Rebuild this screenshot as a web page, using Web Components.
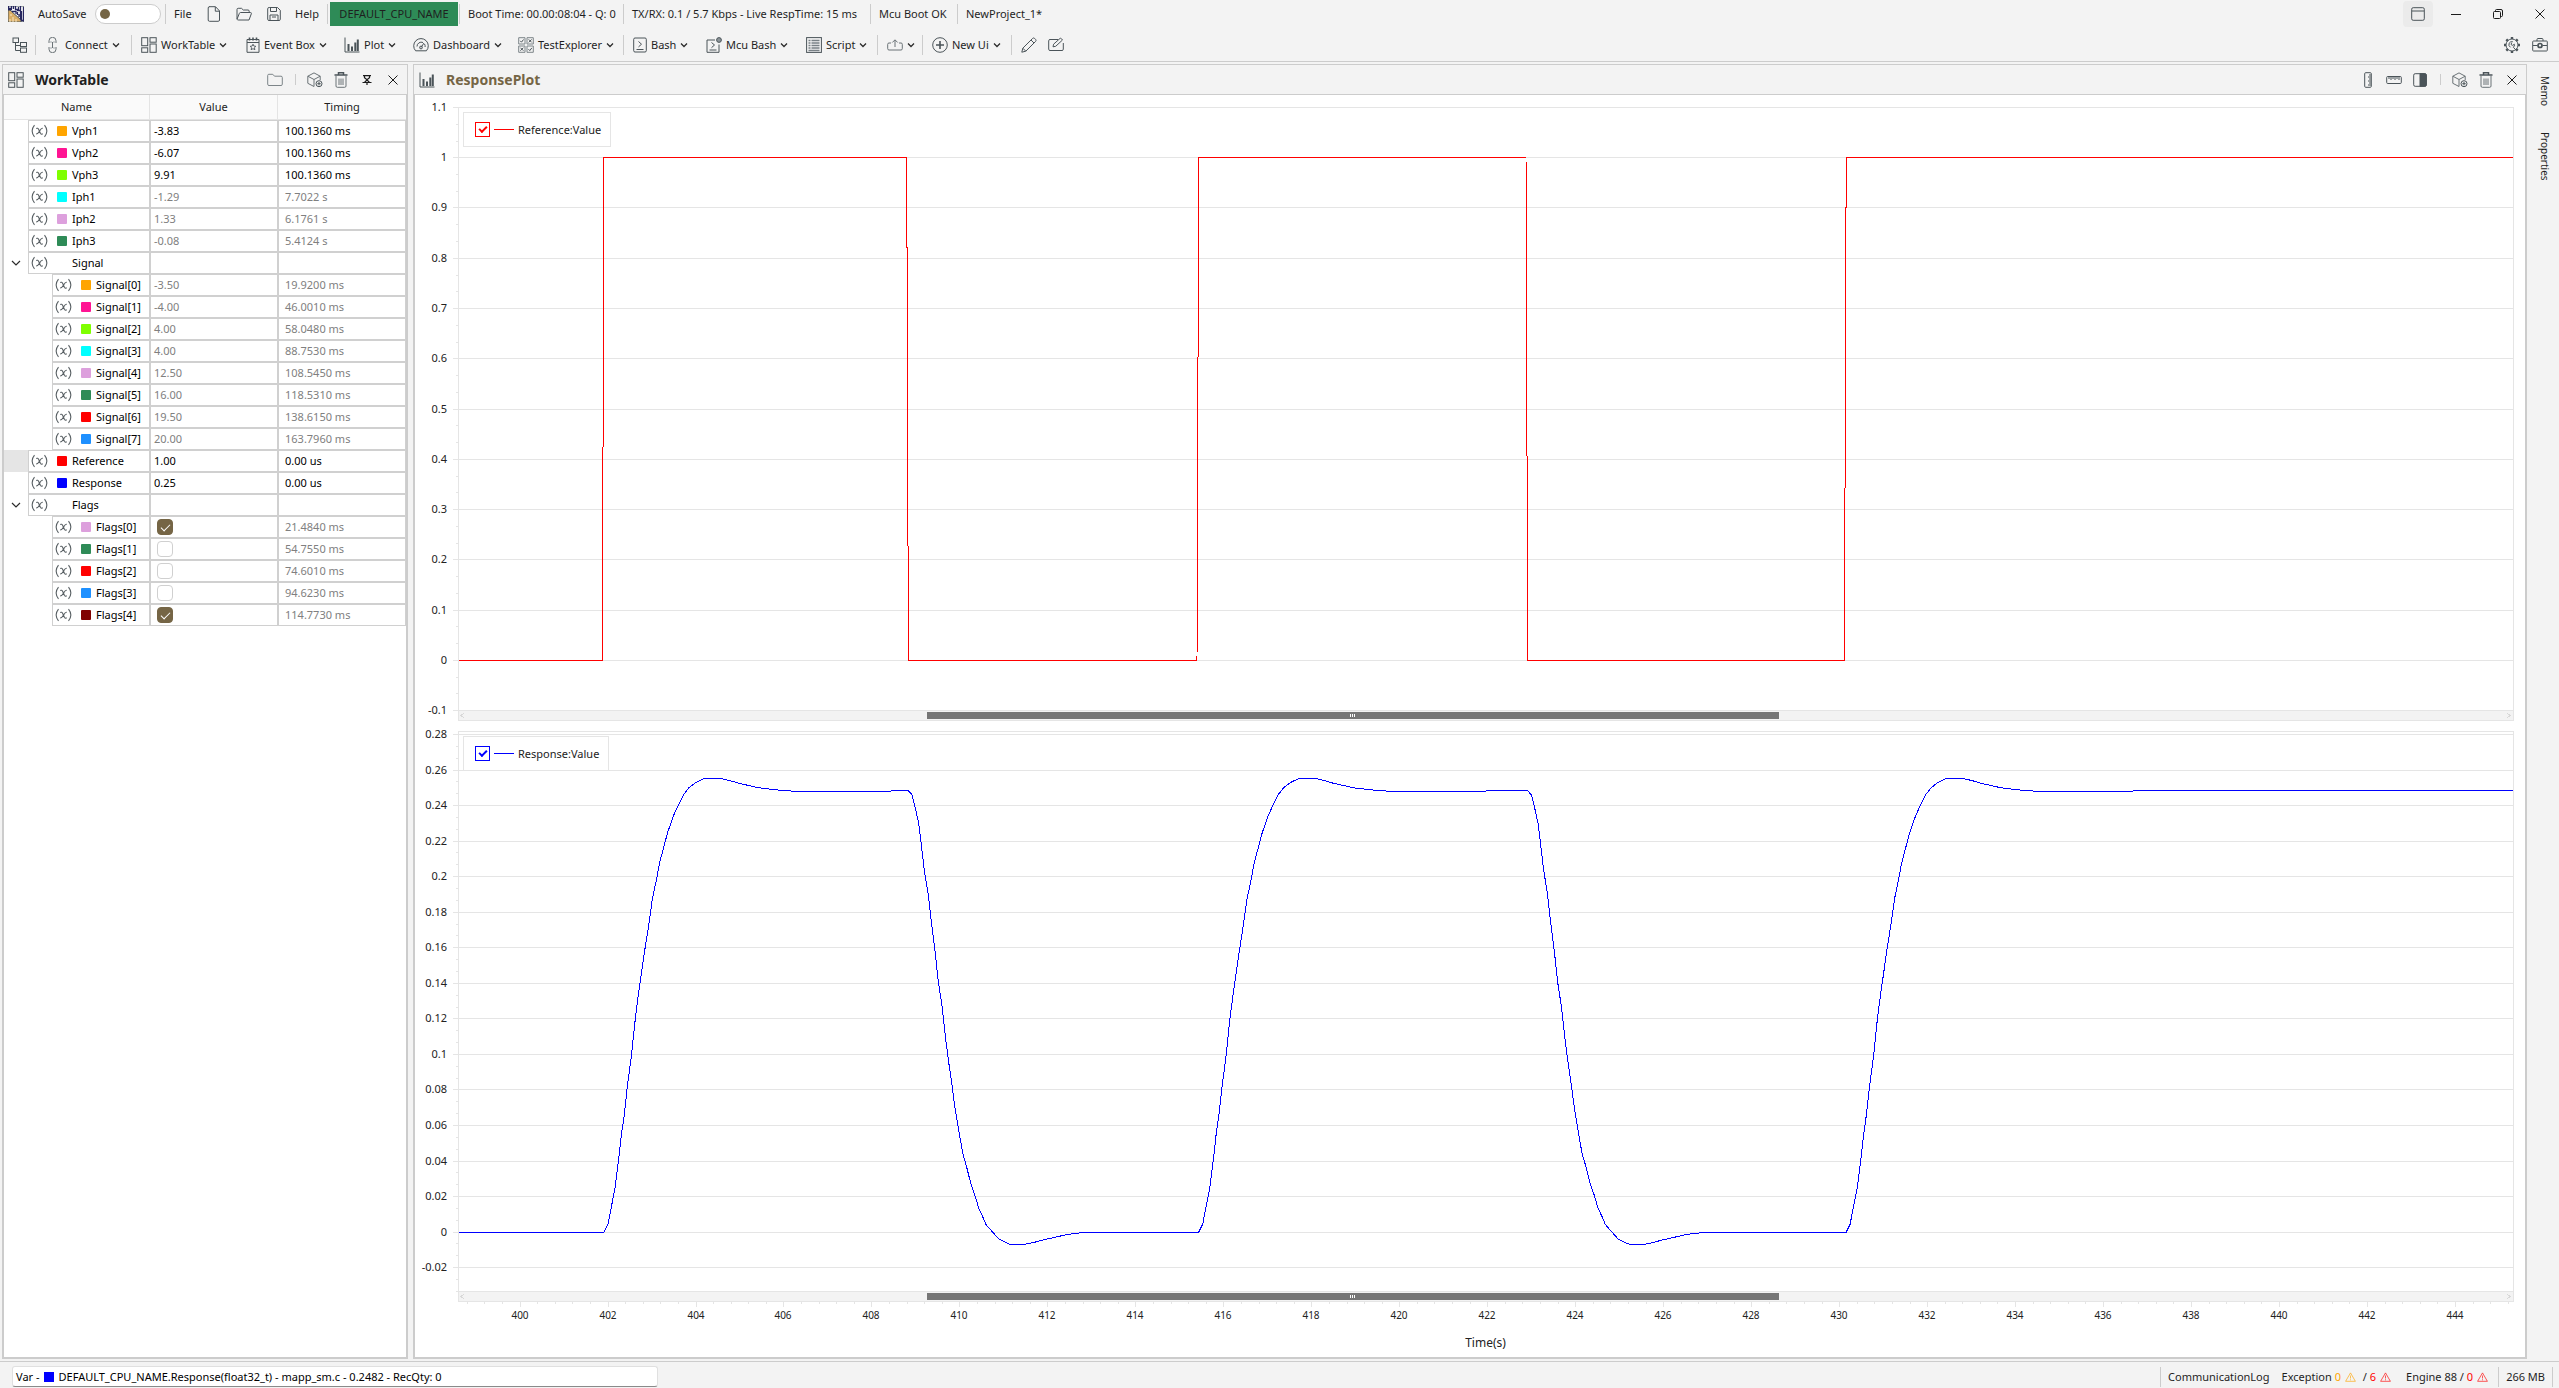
<!DOCTYPE html>
<html lang="en">
<head>
<meta charset="utf-8">
<title>NewProject_1</title>
<style>
html, body { margin: 0; height: 100%; }
body { background: #f3f3f3; color: #1f1f1f; font: 11px/16px "Noto Sans", "Open Sans", sans-serif; overflow: hidden; }
</style>
</head>
<body>
<app-shell></app-shell>
<script>
const define = (tag, html, setup) => customElements.define(tag, class extends HTMLElement {
  constructor() {
    super();
    this.attachShadow({ mode: 'open' }).innerHTML = html;
  }
  connectedCallback() {
    if (this.ready) return;
    this.ready = true;
    if (setup) setup(this, this.shadowRoot);
  }
});

/* ---------- icons: [width, height, markup] ---------- */
const ICONS = {
  logo: [16, 16, '<rect width="16" height="16" fill="#fff"/><path d="M0 4h2l11 10v2H0z" fill="#d9ad66"/><path d="M2 13v3M5 11v5M8 13v3M3 8v2" stroke="#f7e7c6"/><path d="M.5 0v2.500h3V0M5.500 0v3M7.500 0v3.500h3V1M12.500 0v4M0 3.500h4M4 5.500h4v2.500M9 4.500h3.500v9M15.500 1v14.500M13.500 5v9.500H16M9.500 6v3M11 8v3" stroke="#26265f" stroke-width="1.300" fill="none"/>'],
  file: [14, 16, '<path d="M2 .7h6.500l4 4.200V14q0 1.300-1.300 1.300H2.500Q1.200 15.300 1.200 14V2Q1.200.7 2.500.7M8.300.9v4.300h4.200"/>'],
  open: [16, 16, '<path d="M1 13V3.500Q1 2.300 2.200 2.300h3.300L7.300 4H12q1.200 0 1.200 1.200V6.500M1 13.200q.3.800 1.200.800H13L15.400 7.600q.1-1.100-1-1.100H4.500q-.8 0-1.100.8z"/>'],
  save: [14, 16, '<path d="M2.200 1.500h8.300l2.800 2.800v8.900q0 1.300-1.300 1.300H2Q.7 14.500.7 13.200V2.800Q.7 1.500 2.200 1.500M3.500 1.700v3.800h6V1.700M3 14.300V9h8v5.300M5 11h4"/>'],
  tree: [16, 16, '<rect x="1" y="1" width="5.500" height="4.500"/><path d="M3.500 5.500v8h4.500M3.500 8.500h4.500"/><rect x="8.500" y="5.500" width="6" height="4"/><rect x="8.500" y="11" width="6" height="4.300"/>'],
  link: [16, 16, '<path d="M4 6V3.800a3.500 3.500 0 0 1 7 0V6M4 10v2.200a3.500 3.500 0 0 0 7 0V10M7.500 5v6" stroke="#6b7377"/><path d="M6 6v-2M9 6v-2M6 10v2M9 10v2" stroke="#a5abae"/>'],
  work: [16, 16, '<rect x=".7" y=".7" width="6" height="8"/><rect x=".7" y="10.800" width="6" height="4.500"/><rect x="9" y=".7" width="6.200" height="4.500"/><rect x="9" y="7" width="6.200" height="8.300"/>'],
  event: [14, 16, '<path d="M1 2.500h12v12.800H1zM1 5.500h12"/><path d="M3.500.5v3M7 .5v3M10.500.5v3" stroke-width="1.600"/><path d="M7 7.200l.9 1.900 2 .2-1.500 1.400.5 2L7 11.700l-1.900 1 .5-2-1.500-1.400 2-.2z" stroke-width=".9"/>'],
  plot: [16, 16, '<path d="M1 .5v14.500h14.500"/><path d="M4.500 14V7M8 14V9.500M11.300 14V5.500M13.800 14V2.500" stroke-width="2"/>'],
  dash: [16, 16, '<path d="M2.600 13.800a7.300 7.300 0 1 1 10.800 0zM4 9.500a4.300 4.300 0 0 1 6-4M11.500 7a4.300 4.300 0 0 1 .6 3M8 10.500L11 6"/><circle cx="8" cy="10.500" r="1.400"/>'],
  test: [16, 16, '<path d="M.7.7h6.300v6.300H.7zM9 .7h6.300v6.300H9zM.7 9h6.300v6.300H.7zM9 9h6.300v6.300H9z" stroke="#7d8589"/><path d="M2.200 3.800l1.300 1.400 2-2.700M10.700 2.400l3 3M13.700 2.400l-3 3M2.400 10.700l3 3M5.400 10.700l-3 3M10.500 12.200l1.300 1.400 2-2.700"/>'],
  bash: [14, 16, '<rect x=".7" y="1" width="12.600" height="14" rx="1.300"/><path d="M5.500 4.500L8.500 7.200l-3 2.700M3.500 12.500h7"/>'],
  mcu: [16, 16, '<path d="M9 3H1v12.300h12V7.500"/><path d="M5.500 5.500L8.500 8l-3 2.700M3.500 13h7"/><circle cx="13" cy="3" r="2.400" fill="#8d9599"/>'],
  script: [16, 16, '<rect x=".6" y=".6" width="14.800" height="14.800"/><path d="M2.500 3.500h2M5.500 3.500h8M2.500 6h2M5.500 6h8M2.500 8.500h2M5.500 8.500h8M2.500 11h2M5.500 11h8M2.500 13.500h11" stroke="#798186" stroke-width="1.500"/>'],
  export: [16, 16, '<path d="M4 6H2Q.7 6 .7 7.300v4.400Q.7 13 2 13h12q1.300 0 1.300-1.300V7.300Q15.300 6 14 6h-2M8 10V3M5.300 5.500L8 2.800l2.700 2.700" stroke="#6b7377"/>'],
  plus: [16, 16, '<circle cx="8" cy="8" r="7.300"/><path d="M8 4v8M4 8h8" stroke-width="1.600"/>'],
  pencil: [16, 16, '<path d="M.8 15.200l1-4L11.600 1.400q1-.9 2 0l1 1q.9 1 0 2L4.800 14.200zM10 3l3 3M1.800 11.200l3 3"/>'],
  edit: [16, 16, '<path d="M10 2.500H2Q.7 2.500.7 3.800v8.400Q.7 13.500 2 13.500h12q1.300 0 1.300-1.300V6M5 9.800l.6-2.600L12.500 1l2 2-6.800 6.300z"/>'],
  gear: [16, 16, '<circle cx="8" cy="8" r="6" stroke-width="1"/><path d="M8 0v2M8 14v2M0 8h2M14 8h2M2.300 2.300l1.500 1.500M12.200 12.200l1.500 1.500M2.300 13.700l1.500-1.500M12.200 3.800l1.500-1.500" stroke-width="2.400"/><path d="M8.800 4.700q-2.500-.5-3.700 1.600-.9 2.700 1.400 4M7.500 5.800l-.3 1.900 1.500.7 1.600-1.200q.8 1.900-1 3l2.700 3"/>'],
  box: [16, 16, '<path d="M5 4V2.500Q5 1.500 6 1.500h4q1 0 1 1V4M1.500 4h13q.8 0 .8.800v8.400q0 .8-.8.800h-13q-.8 0-.8-.8V4.800Q.7 4 1.500 4M1 8.500h4.500M10.500 8.500H15"/><circle cx="8" cy="8.500" r="2" stroke-width="1.700"/>'],
  window: [14, 14, '<rect x=".7" y=".7" width="12.600" height="12.600" rx="1.500"/><path d="M1 4h12"/>'],
  min: [10, 10, '<path d="M0 5.500h10" stroke="#1b1b1b"/>'],
  restore: [10, 10, '<rect x=".5" y="2.500" width="7" height="7" rx="1" stroke="#1b1b1b"/><path d="M2.500 2.300V1.500q0-1 1-1H8q1.500 0 1.500 1.500v4.500q0 1-1 1H8" stroke="#1b1b1b"/>'],
  close: [10, 10, '<path d="M.5.5l9 9M9.500.5l-9 9" stroke="#1b1b1b"/>'],
  folder: [16, 16, '<path d="M1.800 2.300h4l1.700 1.900H14q1.300 0 1.300 1.300v6.700q0 1.300-1.300 1.300H2Q.7 13.500.7 12.200V3.500Q.7 2.300 1.800 2.300" stroke="#7d8589"/>'],
  cube: [16, 16, '<path d="M7 14.500L.8 11.300V4.200L7 .9l6.200 3.300V8M.8 4.200L7 7.500l6.200-3.300M7 7.500v7" stroke="#6b7377"/><circle cx="12" cy="11.700" r="3"/><path d="M12 10v3.400M10.300 11.700h3.400"/>'],
  trash: [14, 16, '<path d="M2 4v10q0 1.300 1.300 1.300h7.400Q12 15.300 12 14V4M5 6.500v6.500M7 6.500v6.500M9 6.500v6.500" stroke="#6b7377"/><path d="M.5 3h13M4.500 2.500V.8h5v1.700" stroke-width="1.500"/>'],
  pin: [10, 10, '<path d="M1 .7h8M2.500.7v2L5 4.800 7.500 2.700v-2M2.500 7.500L5 4.800l2.500 2.700zM.5 7.500h9M5 7.500v3" stroke="#1b1b1b" stroke-width="1.200"/>'],
  rulerv: [8, 16, '<rect x=".7" y=".7" width="6.600" height="14.600" rx="1"/><path d="M5 3h2M4 5h3M5 7h2M4 9h3M5 11h2M4 13h3"/>'],
  rulerh: [16, 16, '<rect x=".7" y="4.500" width="14.600" height="7" rx="1"/><path d="M3 5v2M5 5v3M7 5v2M9 5v3M11 5v2M13 5v3"/>'],
  half: [14, 14, '<rect x=".7" y=".7" width="12.600" height="12.600" rx="1.500"/><path d="M7 .7h4.800q1.500 0 1.500 1.500v9.600q0 1.500-1.500 1.500H7z" fill="#4b5459"/>'],
  down: [8, 8, '<path d="M1 2.500L4 5.500l3-3" stroke="#2b2b2b" stroke-width="1.300"/>'],
  expand: [10, 8, '<path d="M1 2l4 4 4-4" stroke="#2b2b2b" stroke-width="1.200"/>'],
  variable: [17, 14, '<path d="M3.500 1.200Q-1.200 7 3.500 12.800M13.500 1.200Q18.200 7 13.500 12.800M5.200 4.500q1.600-.9 2.400.7l1.800 4q.8 1.600 2.400.6M11.800 4.300q-1.500-.3-3.200 2.700t-3.500 3" stroke="#596064" stroke-width="1.100"/>'],
  warn: [11, 10, '<path d="M5.500 .9L10.400 9.300H.6zM5.500 3.500v3M5.500 7.300v1" stroke="currentColor" opacity=".65"/>']
};

define('ui-icon', '', (el, root) => {
  const [w, h, body] = ICONS[el.getAttribute('name')];
  root.innerHTML = `<style>:host{display:inline-flex;flex:none;align-items:center}svg{display:block}</style>
    <svg width="${w}" height="${h}" viewBox="0 0 ${w} ${h}" fill="none" stroke="#4b5459" aria-hidden="true">${body}</svg>`;
});

/* vertical hairline between groups */
define('bar-sep', '<style>:host{flex:none;display:block;width:1px;height:var(--h,20px);background:#cccccc}</style>');

define('status-text', `<style>
  :host { display: flex; flex: none; align-items: center; white-space: nowrap; width: var(--w, auto); box-sizing: border-box; }
</style><slot></slot>`);

/* toolbar button: icon, text, optional drop-down arrow */
define('tool-button', `<style>
  :host { display: flex; flex: none; width: var(--w, auto); }
  button { display: flex; align-items: center; gap: 4px; width: 100%; height: 24px; padding: 0; border: 0; background: none;
    font: inherit; color: inherit; white-space: nowrap; }
</style><button type="button"></button>`, (el, root) => {
  const b = root.querySelector('button');
  const icon = el.getAttribute('icon'), text = el.getAttribute('text') || '';
  b.innerHTML = (icon ? `<ui-icon name="${icon}"></ui-icon>` : '') + (text ? `<span>${text}</span>` : '') +
    (el.hasAttribute('menu') ? '<ui-icon name="down"></ui-icon>' : '');
  if (!text) b.setAttribute('aria-label', el.getAttribute('label') || icon);
});

define('toggle-switch', `<style>
  :host { display: flex; flex: none; width: 123px; }
  label { display: flex; flex: 1; align-items: center; justify-content: space-between; }
  input { appearance: none; margin: 0; width: 66px; height: 20px; border: 1px solid #cccccc; border-radius: 10px; background: #fff; display: flex; align-items: center; padding: 0 4px; box-sizing: border-box; }
  input::before { content: ""; width: 10px; height: 10px; border-radius: 5px; background: #756545; }
</style><label><slot></slot><input type="checkbox"></label>`);

define('title-bar', `<style>
  :host { display: flex; align-items: center; height: 28px; padding-left: 8px; box-sizing: border-box; }
  .cpu { background: #2e8b57; height: 24px; --w: 128px; justify-content: center; margin: 0 1px 0 2px; }
  .pad { padding-left: 8px; }
  .win { margin-left: auto; display: flex; align-items: center; gap: 4px; }
  .win button { display: flex; align-items: center; justify-content: center; width: 38px; height: 26px; padding: 0; border: 0; border-radius: 4px; background: none; }
  .win .on { background: #ebebeb; width: 30px; }
</style>
<status-text style="--w:30px"><ui-icon name="logo"></ui-icon></status-text>
<toggle-switch>AutoSave</toggle-switch>
<status-text style="--w:4px"></status-text><bar-sep></bar-sep>
<status-text class="pad" style="--w:41px">File</status-text>
<tool-button icon="file" label="New" style="--w:29px"></tool-button>
<tool-button icon="open" label="Open" style="--w:31px"></tool-button>
<tool-button icon="save" label="Save" style="--w:28px"></tool-button>
<status-text style="--w:32px">Help</status-text><bar-sep></bar-sep>
<status-text class="cpu">DEFAULT_CPU_NAME</status-text><bar-sep></bar-sep>
<status-text class="pad" style="--w:163px">Boot Time: 00.00:08:04 - Q: 0</status-text><bar-sep></bar-sep>
<status-text class="pad" style="--w:246px">TX/RX: 0.1 / 5.7 Kbps - Live RespTime: 15 ms</status-text><bar-sep></bar-sep>
<status-text class="pad" style="--w:86px">Mcu Boot OK</status-text><bar-sep></bar-sep>
<status-text class="pad">NewProject_1*</status-text>
<div class="win">
  <button class="on" type="button" aria-label="Layout"><ui-icon name="window"></ui-icon></button>
  <button type="button" aria-label="Minimize"><ui-icon name="min"></ui-icon></button>
  <button type="button" aria-label="Restore"><ui-icon name="restore"></ui-icon></button>
  <button type="button" aria-label="Close"><ui-icon name="close"></ui-icon></button>
</div>`);

define('tool-bar', `<style>
  :host { display: flex; align-items: center; height: 34px; padding: 0 11px 0 12px; box-sizing: border-box; border-bottom: 1px solid #cccccc; }
  .end { margin-left: auto; display: flex; gap: 12px; }
  .lead { padding-left: 9px; }
</style>
<tool-button icon="tree" label="Project tree" style="--w:23px"></tool-button><bar-sep></bar-sep>
<tool-button class="lead" icon="link" text="Connect" menu style="--w:86px"></tool-button><bar-sep></bar-sep>
<tool-button class="lead" icon="work" text="WorkTable" menu style="--w:105px"></tool-button>
<tool-button icon="event" text="Event Box" menu style="--w:98px"></tool-button>
<tool-button icon="plot" text="Plot" menu style="--w:69px"></tool-button>
<tool-button icon="dash" text="Dashboard" menu style="--w:105px"></tool-button>
<tool-button icon="test" text="TestExplorer" menu style="--w:105px"></tool-button><bar-sep></bar-sep>
<tool-button class="lead" icon="bash" text="Bash" menu style="--w:73px"></tool-button>
<tool-button icon="mcu" text="Mcu Bash" menu style="--w:100px"></tool-button>
<tool-button icon="script" text="Script" menu style="--w:71px"></tool-button><bar-sep></bar-sep>
<tool-button class="lead" icon="export" label="Export" menu style="--w:35px"></tool-button><bar-sep></bar-sep>
<tool-button class="lead" icon="plus" text="New Ui" menu style="--w:79px"></tool-button><bar-sep></bar-sep>
<tool-button class="lead" icon="pencil" label="Draw" style="--w:27px"></tool-button>
<tool-button icon="edit" label="Edit"></tool-button>
<div class="end">
  <tool-button icon="gear" label="Settings"></tool-button>
  <tool-button icon="box" label="Tools"></tool-button>
</div>`);

/* docked panel: header with title and actions, slotted body */
define('dock-panel', `<style>
  :host { display: flex; flex-direction: column; border: 1px solid #cccccc; box-sizing: border-box; min-width: 0; }
  header { display: flex; align-items: center; height: 29px; padding: 0 1px 0 5px; border-bottom: 1px solid #cccccc; flex: none; }
  h2 { margin: 0 auto 0 11px; font-size: 14px; line-height: 20px; font-weight: 700; color: var(--title, #1f1f1f); }
  ::slotted([slot=actions]) { display: flex; align-items: center; justify-content: center; width: 26px; }
  .body { flex: 1; min-height: 0; display: flex; flex-direction: column; background: #fff; border: solid #cccccc; border-width: 0 1px 1px; }
</style>
<header><slot name="icon"></slot><h2></h2><slot name="actions"></slot></header>
<div class="body"><slot></slot></div>`, (el, root) => { root.querySelector('h2').textContent = el.getAttribute('heading'); });

/* ---------- variable grid ---------- */
const ROWS = [
  [1, '#ffa500', 'Vph1', '-3.83', '100.1360 ms', 'live'],
  [1, '#ff1493', 'Vph2', '-6.07', '100.1360 ms', 'live'],
  [1, '#7fff00', 'Vph3', '9.91', '100.1360 ms', 'live'],
  [1, '#00ffff', 'Iph1', '-1.29', '7.7022 s'],
  [1, '#dda0dd', 'Iph2', '1.33', '6.1761 s'],
  [1, '#2e8b57', 'Iph3', '-0.08', '5.4124 s'],
  [1, '', 'Signal', '', '', 'group'],
  [2, '#ffa500', 'Signal[0]', '-3.50', '19.9200 ms'],
  [2, '#ff1493', 'Signal[1]', '-4.00', '46.0010 ms'],
  [2, '#7fff00', 'Signal[2]', '4.00', '58.0480 ms'],
  [2, '#00ffff', 'Signal[3]', '4.00', '88.7530 ms'],
  [2, '#dda0dd', 'Signal[4]', '12.50', '108.5450 ms'],
  [2, '#2e8b57', 'Signal[5]', '16.00', '118.5310 ms'],
  [2, '#ff0000', 'Signal[6]', '19.50', '138.6150 ms'],
  [2, '#1e90ff', 'Signal[7]', '20.00', '163.7960 ms'],
  [1, '#ff0000', 'Reference', '1.00', '0.00 us', 'live current'],
  [1, '#0000ff', 'Response', '0.25', '0.00 us', 'live'],
  [1, '', 'Flags', '', '', 'group'],
  [2, '#dda0dd', 'Flags[0]', true, '21.4840 ms'],
  [2, '#2e8b57', 'Flags[1]', false, '54.7550 ms'],
  [2, '#ff0000', 'Flags[2]', false, '74.6010 ms'],
  [2, '#1e90ff', 'Flags[3]', false, '94.6230 ms'],
  [2, '#800000', 'Flags[4]', true, '114.7730 ms']
];

define('work-grid', `<style>
  :host { display: block; line-height: 16px; color: #000; }
  table { width: 100%; border-spacing: 0; table-layout: fixed; }
  th { height: 24px; padding: 0; background: #fafafa; border: solid #e4e4e4; border-width: 0 1px 1px 0; font-weight: 400; color: #222; }
  th:last-child { border-right: 0; }
  td { height: 22px; padding: 0; box-sizing: border-box; }
  td.v, td.t { border: 1px solid #d0d0d0; color: #808080; white-space: nowrap; }
  .live td.v, .live td.t { color: #000; }
  td.v { padding-left: 3px; } td.t { padding-left: 6px; }
  .name { display: flex; height: 22px; }
  .gut { flex: none; width: 24px; display: flex; align-items: center; justify-content: center; }
  .l2 .gut { width: 48px; }
  .current .gut { background: #e5e5e5; }
  .gut button { border: 0; padding: 0; background: none; display: flex; }
  .cell { flex: 1; display: flex; align-items: center; border: 1px solid #d0d0d0; padding-left: 2px; white-space: nowrap; }
  .sw { width: 10px; height: 10px; border-radius: 1px; margin: 0 5px 0 9px; }
  input { appearance: none; display: grid; place-items: center; width: 16px; height: 16px; margin: 0 0 0 3px; border: 1px solid #d0d0d0; border-radius: 4px; background: #fff; }
  input:checked { background: #756545; border-color: #756545; }
  input:checked::before { content: ""; width: 8px; height: 4px; border: solid #fff; border-width: 0 0 1px 1px; transform: translateY(-1px) rotate(-45deg); }
</style>
<table><colgroup><col style="width:146px"><col><col></colgroup>
<thead><tr><th>Name</th><th>Value</th><th>Timing</th></tr></thead><tbody></tbody></table>`, (el, root) => {
  root.querySelector('tbody').innerHTML = ROWS.map(([lvl, color, name, value, time, cls = '']) => `
    <tr class="${cls} l${lvl}">
      <td><div class="name"><span class="gut">${cls === 'group' ? '<button type="button" aria-label="Collapse"><ui-icon name="expand"></ui-icon></button>' : ''}</span>
        <span class="cell"><ui-icon name="variable"></ui-icon><span class="sw"${color ? ` style="background:${color}"` : ''}></span>${name}</span></div></td>
      <td class="v">${typeof value === 'boolean' ? `<input type="checkbox" aria-label="${name}"${value ? ' checked' : ''}>` : value}</td>
      <td class="t">${time}</td>
    </tr>`).join('');
});

/* ---------- charts ---------- */
const EDGES = [401.9, 408.82, 415.42, 422.9, 430.14];
/* step response: [seconds after the edge, fraction of the 0.248 plateau] */
const STEP = [[0,0],[.045,.009],[.09,.018],[.16,.054],[.25,.1],[.302,.141],[.35,.179],[.395,.221],[.46,.266],[.53,.33],[.62,.398],[.71,.484],[.78,.538],[.85,.587],[.92,.636],[1.01,.693],[1.1,.757],[1.19,.799],[1.26,.837],[1.39,.886],[1.44,.905],[1.58,.945],[1.69,.969],[1.81,.993],[1.93,1.008],[2.08,1.02],[2.27,1.029],[2.67,1.029],[2.88,1.024],[3.07,1.018],[3.26,1.014],[3.52,1.008],[3.79,1.005],[4.05,1.002],[4.4,1],[6.5,1],[6.55,1.0015]];
const FALL = [[0,1.0015],[.083,.992],[.16,.961],[.235,.927],[.29,.882],[.36,.822],[.447,.769],[.515,.708],[.606,.636],[.68,.568],[.765,.512],[.85,.436],[.924,.379],[.99,.334],[1.06,.281],[1.144,.232],[1.235,.179],[1.326,.147],[1.417,.111],[1.508,.085],[1.6,.054],[1.69,.035],[1.765,.017],[1.917,0],[2.05,-.015],[2.18,-.022],[2.31,-.0275],[2.65,-.0275],[2.83,-.024],[3.05,-.018],[3.58,-.006],[3.77,-.003],[4.1,0]];

const SERIES = {
  reference(t0, t1) {
    const p = [[t0, 0]];
    EDGES.forEach((t, i) => p.push([t - .02, i % 2 ? 1 : 0], [t + .02, i % 2 ? 0 : 1]));
    p.push([t1, 1]);
    return p;
  },
  response(t0, t1) {
    const p = [[t0, 0]];
    EDGES.forEach((t, i) => (i % 2 ? FALL : STEP).forEach(([d, f]) => p.push([t + .02 + d, f * .248])));
    p.push([t1, .2484]);
    return p;
  }
};

define('time-chart', `<style>
  :host { display: block; position: relative; min-height: 0; color: #222; }
  svg { position: absolute; inset: 0; display: block; width: 100%; height: 100%; shape-rendering: crispEdges; }
  text { fill: #222; }
  label { position: absolute; left: 48px; box-sizing: border-box; height: 35px; display: flex; align-items: center; gap: 4px; padding: 0 9px 0 11px; border: 1px solid #e5e5e5; background: #fff; white-space: nowrap; }
  input { appearance: none; margin: 0; width: 15px; height: 15px; border: 1px solid var(--c); display: grid; place-items: center; }
  input:checked::before { content: ""; width: 6px; height: 3px; border: solid var(--c); border-width: 0 0 2px 2px; transform: translateY(-1px) rotate(-45deg); }
  i { width: 20px; height: 1px; background: var(--c); }
</style><svg></svg><label><input type="checkbox" checked><i></i><span></span></label>`, (el, root) => {
  const num = n => parseFloat(el.getAttribute(n));
  const color = el.getAttribute('color'), top = num('top'), foot = num('foot');
  const axis = num('top-value'), step = num('step'), count = num('count'), span = num('span'), head = num('head') || 0;
  const showTime = el.hasAttribute('time');
  const T0 = 398.6, T1 = 445.32;
  el.style.setProperty('--c', color);
  root.querySelector('label').style.top = (top + 5) + 'px';
  root.querySelector('label span').textContent = el.getAttribute('label');
  const draw = () => {
    const W = el.clientWidth, H = el.clientHeight;
    const L = 43, R = W - 12, y0 = top, y1 = H - foot, bar = 10;
    const X = t => L + (t - T0) / (T1 - T0) * (R - L);
    const unit = (y1 - y0 - head) / span;
    const Y = v => y0 + head + (axis - v) / step * unit;
    const r = v => Math.round(v) + .5;
    let lines = `M${L + .5} ${y0 + .5}H${R + .5}V${r(y1 + bar)}H${L + .5}ZM${L} ${r(y1)}H${R}`, labels = '';
    for (let k = 0; k < count; k++) {
      const v = axis - k * step, y = Y(v);
      lines += `M${L - 5} ${r(y)}H${R}`;
      labels += `<text x="${L - 11}" y="${Math.round(y) + 4}" text-anchor="end">${+v.toFixed(2)}</text>`;
      for (let m = 1; m < 3; m++) { const q = y + unit * m / 3; if (q <= y1 + 1) lines += `M${L - 2} ${r(q)}H${L}`; }
    }
    if (showTime) {
      const b = y1 + bar + 1;
      for (let n = 0; n < 118; n++) {
        const t = 398.8 + n * .4, major = (n - 3) % 5 === 0;
        if (t > T1) break;
        lines += `M${r(X(t))} ${b}v${major ? 5 : 2}`;
        if (major) labels += `<text x="${Math.round(X(t))}" y="${b + 17}" font-size="10" text-anchor="middle">${Math.round(t)}</text>`;
      }
      labels += `<text x="${(L + R) / 2}" y="${b + 45}" font-size="12" text-anchor="middle">Time(s)</text>`;
    }
    const a = L + (R - L) * .2282, z = L + (R - L) * .643, m = Math.round((a + z) / 2);
    const pts = SERIES[el.getAttribute('series')](T0 + .03, T1).map(([t, v]) => X(t).toFixed(1) + ',' + (Y(v) + .5).toFixed(1)).join(' ');
    root.querySelector('svg').innerHTML = `
      <rect x="${L}" y="${y1}" width="${R - L}" height="${bar}" fill="#f3f3f3"/>
      <path d="${lines}" stroke="#e5e5e5" fill="none"/>
      <rect x="${Math.round(a)}" y="${y1 + 2}" width="${Math.round(z - a)}" height="7" fill="#767676"/>
      <path d="M${m - 2.5} ${y1 + 4}v3M${m - .5} ${y1 + 4}v3M${m + 1.5} ${y1 + 4}v3" stroke="#fff"/>
      <path d="M${L + 6} ${y1 + 3}l-3 2.500 3 2.500M${R - 6} ${y1 + 3}l3 2.500-3 2.500" stroke="#d8d8d8" fill="none"/>
      <polyline points="${pts}" fill="none" stroke="${color}"/>${labels}`;
  };
  new ResizeObserver(draw).observe(el);
  draw();
});

define('side-tabs', `<style>
  :host { display: flex; flex-direction: column; align-items: center; gap: 22px; padding: 10px 0 0 4px; box-sizing: border-box; font-size: 10px; }
  button { writing-mode: vertical-rl; border: 0; background: none; padding: 2px 0; font: inherit; line-height: 16px; color: inherit; }
</style><button type="button">Memo</button><button type="button">Properties</button>`);

define('status-bar', `<style>
  :host { display: flex; align-items: center; height: 27px; box-sizing: border-box; border-top: 1px solid #cccccc; padding: 3px 6px 0 12px; }
  .var { width: 646px; height: 21px; box-sizing: border-box; display: flex; align-items: center; padding: 0 3px; color: #000;
    background: #fff; border: 1px solid #e0e0e0; border-bottom-color: #8a8a8a; border-radius: 3px; white-space: pre; }
  .var i { width: 10px; height: 10px; background: #00f; margin: 0 5px 0 4px; }
  .end { margin-left: auto; display: flex; align-items: center; gap: 7px; white-space: nowrap; }
  .grp { display: flex; align-items: center; gap: 4px; padding: 0 3px 0 5px; }
  .o { color: #ffa500; } .r { color: #ff0000; }
</style>
<div class="var"><span>Var -</span><i></i><span>DEFAULT_CPU_NAME.Response(float32_t) - mapp_sm.c - 0.2482 - RecQty: 0</span></div>
<div class="end"><bar-sep></bar-sep><span>CommunicationLog</span>
  <span class="grp"><span>Exception <span class="o">0</span></span><ui-icon class="o" name="warn"></ui-icon><span>&nbsp;/ <span class="r">6</span></span><ui-icon class="r" name="warn"></ui-icon></span>
  <span class="grp"><span>Engine 88 / <span class="r">0</span></span><ui-icon class="r" name="warn"></ui-icon></span>
  <bar-sep></bar-sep><span>266 MB</span><bar-sep></bar-sep></div>`);

define('app-shell', `<style>
  :host { display: flex; flex-direction: column; height: 100vh; }
  main { flex: 1; min-height: 0; display: flex; gap: 5px; padding: 2px 0 2px 2px; }
  .left { flex: none; width: 406px; }
  .right { flex: 1; --title: #756545; }
  side-tabs { width: 32px; margin-left: -5px; flex: none; }
  .mark { width: 14px; --h: 11px; }
  .c1 { flex: 627 1 0; } .c2 { flex: 635 1 0; }
</style>
<title-bar></title-bar><tool-bar></tool-bar>
<main>
  <dock-panel class="left" heading="WorkTable">
    <ui-icon slot="icon" name="work"></ui-icon>
    <ui-icon slot="actions" name="folder"></ui-icon><span slot="actions" class="mark"><bar-sep></bar-sep></span>
    <ui-icon slot="actions" name="cube"></ui-icon><ui-icon slot="actions" name="trash"></ui-icon>
    <ui-icon slot="actions" name="pin"></ui-icon><ui-icon slot="actions" name="close"></ui-icon>
    <work-grid></work-grid>
  </dock-panel>
  <dock-panel class="right" heading="ResponsePlot">
    <ui-icon slot="icon" name="plot"></ui-icon>
    <ui-icon slot="actions" name="rulerv"></ui-icon><ui-icon slot="actions" name="rulerh"></ui-icon>
    <ui-icon slot="actions" name="half"></ui-icon><span slot="actions" class="mark"><bar-sep></bar-sep></span>
    <ui-icon slot="actions" name="cube"></ui-icon><ui-icon slot="actions" name="trash"></ui-icon>
    <ui-icon slot="actions" name="close"></ui-icon>
    <time-chart class="c1" series="reference" label="Reference:Value" color="#ff0000" top="12" foot="12" top-value="1.1" step="0.1" count="13" span="12"></time-chart>
    <time-chart class="c2" series="response" label="Response:Value" color="#0000ff" top="9" foot="66" head="3" top-value="0.28" step="0.02" count="16" span="15.67" time></time-chart>
  </dock-panel>
  <side-tabs></side-tabs>
</main>
<status-bar></status-bar>`);
</script>
</body>
</html>
